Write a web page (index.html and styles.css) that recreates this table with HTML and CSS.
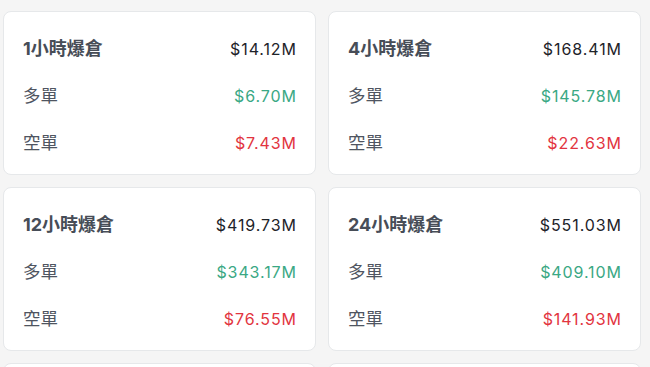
FILE: index.html
```html
<!DOCTYPE html>
<html lang="zh-Hant">
<head>
<meta charset="utf-8">
<title>爆倉統計</title>
<link rel="stylesheet" href="styles.css">
</head>
<body>
<main class="grid">
  <section class="card">
    <div class="row head"><span class="label">1小時爆倉</span><span class="val">$14.12M</span></div>
    <div class="row"><span class="label">多單</span><span class="val up">$6.70M</span></div>
    <div class="row"><span class="label">空單</span><span class="val down">$7.43M</span></div>
  </section>
  <section class="card">
    <div class="row head"><span class="label">4小時爆倉</span><span class="val">$168.41M</span></div>
    <div class="row"><span class="label">多單</span><span class="val up">$145.78M</span></div>
    <div class="row"><span class="label">空單</span><span class="val down">$22.63M</span></div>
  </section>
  <section class="card">
    <div class="row head"><span class="label">12小時爆倉</span><span class="val">$419.73M</span></div>
    <div class="row"><span class="label">多單</span><span class="val up">$343.17M</span></div>
    <div class="row"><span class="label">空單</span><span class="val down">$76.55M</span></div>
  </section>
  <section class="card">
    <div class="row head"><span class="label">24小時爆倉</span><span class="val">$551.03M</span></div>
    <div class="row"><span class="label">多單</span><span class="val up">$409.10M</span></div>
    <div class="row"><span class="label">空單</span><span class="val down">$141.93M</span></div>
  </section>
  <section class="card"></section>
  <section class="card"></section>
</main>
</body>
</html>
```

FILE: styles.css
```css
html, body {
  margin: 0;
  padding: 0;
  background: #f5f5f5;
}
body {
  font-family: Inter, "Noto Sans CJK TC", "Noto Sans", sans-serif;
  overflow: hidden;
  height: 367px;
}
.grid {
  display: grid;
  grid-template-columns: 313px 313px;
  column-gap: 12px;
  row-gap: 12px;
  padding: 11px 0 0 3px;
  height: 367px;
  box-sizing: border-box;
  overflow: hidden;
}
.card {
  background: #ffffff;
  border: 1px solid #e6e8ea;
  border-radius: 8px;
  height: 164px;
  box-sizing: border-box;
  padding: 25px 19px 19px 19px;
  display: flex;
  flex-direction: column;
  gap: 23px;
}
.row {
  height: 24px;
  display: flex;
  justify-content: space-between;
  align-items: center;
  font-size: 16px;
  line-height: 24px;
}
.label {
  color: #4f5561;
  font-size: 17.5px;
}
.head .label {
  font-weight: 700;
  font-size: 18px;
  color: #474d57;
}
.val {
  color: #1e2329;
  letter-spacing: 0.9px;
  margin-right: -0.9px;
}
.val.up {
  color: #3aa884;
}
.val.down {
  color: #e23440;
}
```
